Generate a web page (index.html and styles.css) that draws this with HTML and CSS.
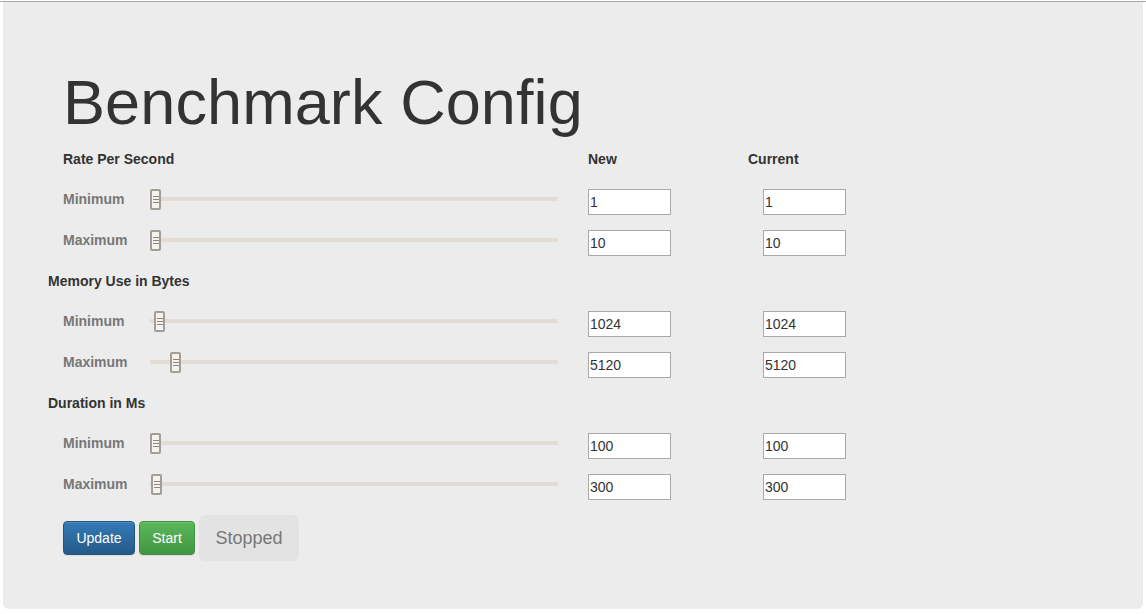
FILE: index.html
```html
<!DOCTYPE html>
<html>
<head>
<meta charset="utf-8">
<title>Benchmark Config</title>
<link rel="stylesheet" href="styles.css">
</head>
<body>
<div class="topline"></div>
<div class="panel">
  <h1 class="title">Benchmark Config</h1>
  <div class="form">
    <div class="row head first">
      <div class="head-label">Rate Per Second</div>
      <div class="col-new">New</div>
      <div class="col-cur">Current</div>
    </div>
    <div class="row item">
      <div class="lbl">Minimum</div>
      <div class="slider"><div class="track"></div><div class="thumb" style="left:0px"><i></i></div></div>
      <input class="num new" type="text" value="1">
      <input class="num cur" type="text" value="1">
    </div>
    <div class="row item">
      <div class="lbl">Maximum</div>
      <div class="slider"><div class="track"></div><div class="thumb" style="left:0px"><i></i></div></div>
      <input class="num new" type="text" value="10">
      <input class="num cur" type="text" value="10">
    </div>

    <div class="row head">
      <div class="head-label">Memory Use in Bytes</div>
    </div>
    <div class="row item">
      <div class="lbl">Minimum</div>
      <div class="slider"><div class="track"></div><div class="thumb" style="left:4px"><i></i></div></div>
      <input class="num new" type="text" value="1024">
      <input class="num cur" type="text" value="1024">
    </div>
    <div class="row item">
      <div class="lbl">Maximum</div>
      <div class="slider"><div class="track"></div><div class="thumb" style="left:20px"><i></i></div></div>
      <input class="num new" type="text" value="5120">
      <input class="num cur" type="text" value="5120">
    </div>

    <div class="row head">
      <div class="head-label">Duration in Ms</div>
    </div>
    <div class="row item">
      <div class="lbl">Minimum</div>
      <div class="slider"><div class="track"></div><div class="thumb" style="left:0px"><i></i></div></div>
      <input class="num new" type="text" value="100">
      <input class="num cur" type="text" value="100">
    </div>
    <div class="row item">
      <div class="lbl">Maximum</div>
      <div class="slider"><div class="track"></div><div class="thumb" style="left:1px"><i></i></div></div>
      <input class="num new" type="text" value="300">
      <input class="num cur" type="text" value="300">
    </div>

    <div class="actions">
      <button class="btn btn-update" type="button">Update</button>
      <button class="btn btn-start" type="button">Start</button>
      <div class="status">Stopped</div>
    </div>
  </div>
</div>
</body>
</html>
```
FILE: styles.css
```css
html, body {
  margin: 0;
  padding: 0;
  background: #ffffff;
}
body {
  font-family: "Liberation Sans", Arial, sans-serif;
  font-size: 14px;
  color: #333333;
  padding-top: 1px;
}
.topline {
  height: 1px;
  background: #a9a9a9;
}
.panel {
  box-sizing: border-box;
  margin-left: 3px;
  width: 1140px;
  height: 607px;
  background: #ececec;
  border-radius: 0 0 6px 6px;
  padding: 66px 0 0 45px;
}
.title {
  margin: 0 0 2px 15px;
  font-size: 63px;
  font-weight: normal;
  line-height: 69px;
  letter-spacing: 0.1px;
  color: #333333;
}
.form {
  display: flex;
  flex-direction: column;
}
.row {
  display: flex;
  align-items: center;
}
.row.head {
  height: 40px;
  font-weight: bold;
}
.row.item {
  height: 41px;
  padding-left: 15px;
}
.head-label {
  width: 540px;
}
.row.head.first .head-label {
  padding-left: 15px;
  width: 525px;
}
.col-new {
  width: 160px;
}
.col-cur {
  width: 120px;
}
.lbl {
  width: 87px;
  font-weight: bold;
  color: #777777;
  margin-top: -1px;
}
.slider {
  position: relative;
  width: 408px;
  height: 21px;
}
.track {
  position: absolute;
  left: 0;
  right: 0;
  top: 8px;
  height: 4px;
  background: #e1dcd5;
  border-radius: 1px;
}
.thumb {
  position: absolute;
  top: 0;
  box-sizing: border-box;
  width: 11px;
  height: 21px;
  border: 2px solid #a39d95;
  border-radius: 2px;
  background: #f4f2ef;
  display: flex;
  align-items: center;
  justify-content: center;
}
.thumb i {
  display: block;
  width: 6px;
  height: 7px;
  border-top: 1px solid #8c867e;
  border-bottom: 1px solid #8c867e;
  box-sizing: border-box;
  position: relative;
}
.thumb i::after {
  content: "";
  position: absolute;
  left: 0;
  right: 0;
  top: 2px;
  height: 1px;
  background: #8c867e;
}
.num {
  box-sizing: border-box;
  width: 83px;
  height: 26px;
  margin-top: 4px;
  border: 1px solid #a9a9a9;
  background: #ffffff;
  padding: 1px 1px 0;
  font-family: "Liberation Sans", Arial, sans-serif;
  font-size: 14px;
  color: #333333;
  outline: none;
}
.num.new {
  margin-left: 30px;
}
.num.cur {
  margin-left: 92px;
}
.actions {
  display: flex;
  align-items: center;
  gap: 4px;
  padding: 10px 0 0 15px;
}
.btn {
  box-sizing: border-box;
  height: 34px;
  padding: 6px 12px;
  border-radius: 4px;
  font-family: "Liberation Sans", Arial, sans-serif;
  font-size: 14px;
  line-height: 20px;
  color: #ffffff;
  cursor: pointer;
  box-shadow: inset 0 1px 0 rgba(255,255,255,0.15), 0 1px 1px rgba(0,0,0,0.075);
}
.btn-update {
  width: 72px;
  border: 1px solid #245580;
  background: linear-gradient(to bottom, #337ab7 0%, #265a88 100%);
}
.btn-start {
  width: 56px;
  border: 1px solid #3e8f3e;
  background: linear-gradient(to bottom, #5cb85c 0%, #419641 100%);
}
.status {
  box-sizing: border-box;
  width: 100px;
  height: 46px;
  padding: 11px 0;
  text-align: center;
  font-size: 18px;
  line-height: 24px;
  color: #777777;
  background: #e3e3e3;
  border-radius: 6px;
}
```
